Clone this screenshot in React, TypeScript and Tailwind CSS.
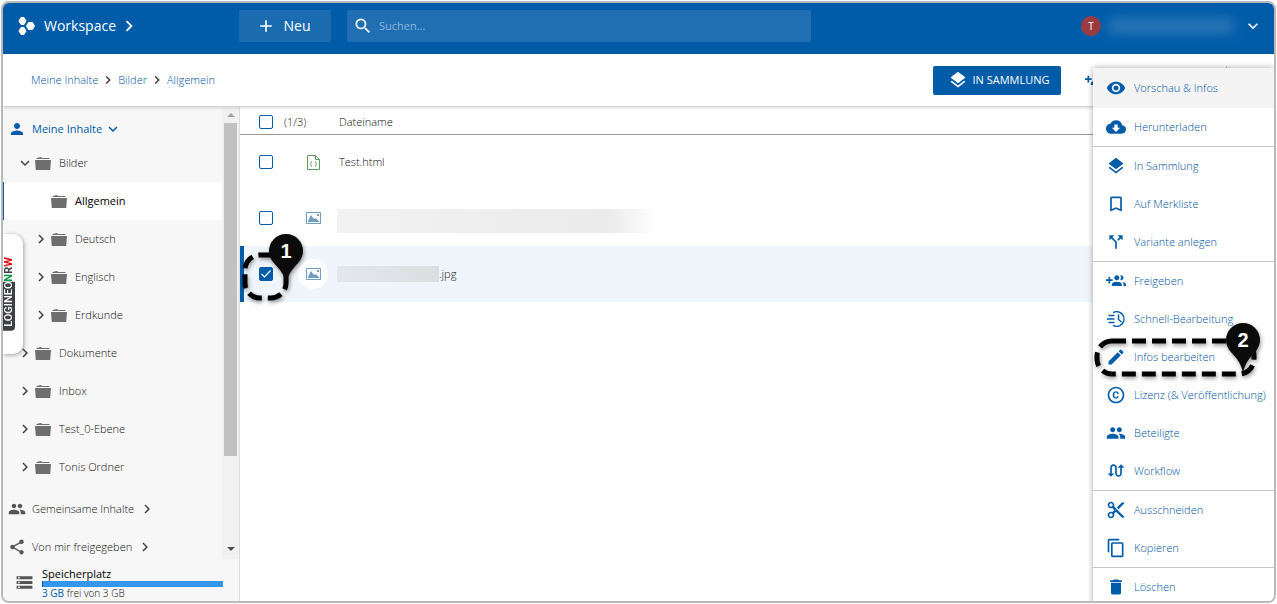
import { useState, type ComponentType, type ReactNode } from "react";
import {
  MdAdd,
  MdBookmarkBorder,
  MdCallSplit,
  MdCloudDownload,
  MdContentCopy,
  MdContentCut,
  MdCopyright,
  MdDelete,
  MdEdit,
  MdKeyboardArrowDown,
  MdKeyboardArrowRight,
  MdLayers,
  MdPeople,
  MdPerson,
  MdRemoveRedEye,
  MdSearch,
  MdShare,
  MdStorage,
  MdSwapCalls,
} from "react-icons/md";

type IconType = ComponentType<{ size?: number; className?: string }>;

function GroupAddIcon({ size = 20, className }: { size?: number; className?: string }) {
  return (
    <svg width={size} height={size} viewBox="0 0 24 24" fill="currentColor" className={className}>
      <path d="M8 10H5V7H3v3H0v2h3v3h2v-3h3v-2zm10 1c1.66 0 2.99-1.34 2.99-3S19.66 5 18 5c-.32 0-.63.05-.91.14.57.81.9 1.79.9 2.86s-.34 2.04-.9 2.86c.28.09.59.14.91.14zm-5 0c1.66 0 2.99-1.34 2.99-3S14.66 5 13 5c-1.66 0-3 1.34-3 3s1.34 3 3 3zm6.62 2.16c.83.73 1.38 1.66 1.38 2.84v2h3v-2c0-1.54-2.37-2.49-4.38-2.84zM13 13c-2 0-6 1-6 3v2h12v-2c0-2-4-3-6-3z" />
    </svg>
  );
}

function QuickEditIcon({ size = 20, className }: { size?: number; className?: string }) {
  return (
    <svg width={size} height={size} viewBox="0 0 20 20" fill="none" stroke="currentColor" strokeWidth="1.5" className={className}>
      <path d="M7 3.700A7.300 7.300 0 1 1 7 16.300" />
      <path d="M12.500 5.500v5l3 2.500M2.500 6.500h6M1 10h7.500M2.500 13.500h6" />
    </svg>
  );
}

function FolderIcon() {
  return (
    <svg width="16" height="13" viewBox="0 0 16 13" fill="#6e6e6e" className="shrink-0">
      <path d="M1.5 2V.9L6 0l1 .9h7.5V2zM0 3h16l-.8 10H.8z" />
    </svg>
  );
}

function Logo() {
  return (
    <svg width="18" height="18" viewBox="0 0 18 18" fill="white">
      <path d="M3 .5h3l2 3.500-2 3.500H3L1 4zM3 10.500h3l2 3.500-2 3.500H3L1 14zM10.500 5.500h4l2 3.500-2 3.500h-4L8.500 9z" stroke="white" strokeLinejoin="round" />
    </svg>
  );
}

// Numbered pin that points at a step of the tutorial
function Pin({ n }: { n: number }) {
  return (
    <>
      <svg width="36" height="52" viewBox="0 0 36 52" className="drop-shadow-[1px_2px_2px_rgba(0,0,0,0.4)]">
        <path d="M18 1a17 17 0 0 1 17 17c0 7-4 11-8 15.500C23 38 20 42 18 51 16 42 13 38 9 33.500 5 29 1 25 1 18A17 17 0 0 1 18 1z" fill="#0b0b0b" />
      </svg>
      <span className="absolute inset-x-0 top-1.5 text-center font-['Liberation_Sans'] text-xl leading-6 font-bold text-white">
        {n}
      </span>
    </>
  );
}

const TREE = [
  { name: "Bilder", level: 0, open: true },
  { name: "Allgemein", level: 1, active: true },
  { name: "Deutsch", level: 1 },
  { name: "Englisch", level: 1 },
  { name: "Erdkunde", level: 1 },
  { name: "Dokumente", level: 0 },
  { name: "Inbox", level: 0 },
  { name: "Test_0-Ebene", level: 0 },
  { name: "Tonis Ordner", level: 0 },
];

const MENU: { label: string; icon: IconType }[][] = [
  [
    { label: "Vorschau & Infos", icon: MdRemoveRedEye },
    { label: "Herunterladen", icon: MdCloudDownload },
  ],
  [
    { label: "In Sammlung", icon: MdLayers },
    { label: "Auf Merkliste", icon: MdBookmarkBorder },
    { label: "Variante anlegen", icon: MdCallSplit },
  ],
  [
    { label: "Freigeben", icon: GroupAddIcon },
    { label: "Schnell-Bearbeitung", icon: QuickEditIcon },
    { label: "Infos bearbeiten", icon: MdEdit },
    { label: "Lizenz (& Veröffentlichung)", icon: MdCopyright },
    { label: "Beteiligte", icon: MdPeople },
    { label: "Workflow", icon: MdSwapCalls },
  ],
  [
    { label: "Ausschneiden", icon: MdContentCut },
    { label: "Kopieren", icon: MdContentCopy },
  ],
  [{ label: "Löschen", icon: MdDelete }],
];

export default function App() {
  return (
    <div className="h-screen bg-white p-px font-['Open_Sans',sans-serif] text-[11px] leading-4 font-light text-[#111]">
      <div className="relative flex h-full flex-col overflow-hidden rounded-lg border-2 border-[#b9b9b9]">
        <TopBar />
        <Toolbar />
        <div className="flex min-h-0 flex-1">
          <Sidebar />
          <FileList />
        </div>
        <ActionMenu />
      </div>
    </div>
  );
}

function TopBar() {
  return (
    <header className="flex h-[51px] shrink-0 items-center bg-[#005ca9] pb-1.5 text-white">
      <button className="flex w-[236px] shrink-0 items-center pl-[15px]">
        <Logo />
        <span className="ml-2 text-sm font-medium">Workspace</span>
        <MdKeyboardArrowRight size={22} className="ml-0.5" />
      </button>
      <button className="flex h-8 w-[92px] shrink-0 items-center justify-center gap-2 bg-[#1b6bb1] pr-1 text-sm font-medium">
        <MdAdd size={20} />
        Neu
      </button>
      <label className="ml-4 flex h-8 w-[464px] items-center gap-1.5 rounded-xs bg-[#1f6fb2] pl-1.5">
        <MdSearch size={20} className="shrink-0" />
        <input
          type="text"
          aria-label="Suchen"
          placeholder="Suchen..."
          className="min-w-0 flex-1 bg-transparent font-normal outline-none placeholder:text-[#8fb8dc]"
        />
      </label>
      <button aria-label="Benutzerkonto" className="mr-[11px] ml-auto flex items-center">
        <span className="flex h-5 w-5 items-center justify-center rounded-full bg-[#9b3a3f] text-[10px] font-normal">T</span>
        <span className="ml-1.5 h-4 w-32 rounded-full bg-[#2a75b7] blur-[6px]" />
        <MdKeyboardArrowDown size={20} className="ml-2" />
      </button>
    </header>
  );
}

function Toolbar() {
  return (
    <div className="z-10 flex h-[53px] shrink-0 items-center border-b border-[#d6d6d6] bg-white shadow-[0_1px_3px_rgba(0,0,0,0.15)]">
      <nav className="flex items-center gap-0.5 pl-7 text-[#0055a4]">
        <a href="#">Meine Inhalte</a>
        <MdKeyboardArrowRight size={16} className="text-[#333]" />
        <a href="#">Bilder</a>
        <MdKeyboardArrowRight size={16} className="text-[#333]" />
        <a href="#">Allgemein</a>
      </nav>
      <button className="ml-auto flex h-[29px] w-32 items-center justify-center gap-1 rounded-xs bg-[#005ca9] pl-1 font-normal text-white">
        <MdLayers size={20} />
        IN SAMMLUNG
      </button>
      <button aria-label="Freigeben" className="ml-6 h-[29px] w-[142px] border-r border-[#ccc] text-[#005ca9]">
        <GroupAddIcon size={20} />
      </button>
      <span className="w-[47px]" />
    </div>
  );
}

function Sidebar() {
  return (
    <aside className="relative flex w-[237px] shrink-0 flex-col border-r border-[#ddd] bg-[#f7f7f7]">
      <div className="flex min-h-0 flex-1">
        <div className="min-w-0 flex-1 overflow-hidden pt-[7px]">
          <button className="flex h-[30px] items-center pl-[5px] font-medium text-[#005ca9]">
            <MdPerson size={18} />
            <span className="ml-1.5">Meine Inhalte</span>
            <MdKeyboardArrowDown size={18} className="ml-0.5" />
          </button>
          <ul>
            {TREE.map((f) => (
              <li key={f.name} className={f.active ? "bg-white" : ""}>
                <button
                  className={`flex h-[38px] w-full items-center gap-2 border-l ${f.level ? "pl-7" : "pl-3"} ${
                    f.active ? "border-[#005ca9] font-medium text-black" : "border-transparent"
                  }`}
                >
                  <span className="flex w-[11px] shrink-0 justify-start">
                    {f.open ? (
                      <MdKeyboardArrowDown size={18} className="shrink-0 text-[#444]" />
                    ) : (
                      !f.active && <MdKeyboardArrowRight size={18} className="shrink-0 text-[#444]" />
                    )}
                  </span>
                  <FolderIcon />
                  {f.name}
                </button>
              </li>
            ))}
          </ul>
          <SectionLink icon={MdPeople} label="Gemeinsame Inhalte" first />
          <SectionLink icon={MdShare} label="Von mir freigegeben" />
        </div>
        <div className="flex w-[17px] shrink-0 flex-col items-center bg-[#f1f1f1]">
          <span className="mt-1.5 mb-1.5 border-x-4 border-b-4 border-transparent border-b-[#a3a3a3]" />
          <span className="h-[333px] w-[13px] bg-[#c1c1c1]" />
          <span className="mt-auto mb-2 border-x-4 border-t-4 border-transparent border-t-[#505050]" />
        </div>
      </div>
      <div className="flex h-[42px] shrink-0 items-center gap-2 pt-1 pr-4 pl-3">
        <MdStorage size={19} className="shrink-0 text-[#555]" />
        <div className="min-w-0 flex-1">
          <div className="font-medium text-black">Speicherplatz</div>
          <div className="-mt-px h-1.5 border-l border-[#005ca9] bg-[#3596f0]" role="progressbar" aria-valuenow={100} aria-label="Speicherplatz" />
          <div className="text-[10px] leading-3">
            <span className="font-medium text-[#005ca9]">3 GB</span> frei von 3 GB
          </div>
        </div>
      </div>
      {/* Lasche am linken Rand */}
      <a
        href="#"
        className="absolute top-[127px] left-0 flex h-[120px] w-5 items-center rounded-r-[10px] bg-white shadow-[1px_1px_4px_rgba(0,0,0,0.35)]"
      >
        <span className="flex rotate-180 items-center font-['Roboto'] text-[11px] leading-3 font-bold [writing-mode:vertical-rl]">
          <span className="rounded-tl-[4px] bg-[#3f4047] pt-1 font-medium text-white">LOGINEO</span>
          <span className="text-[#009640]">N</span>
          <span className="text-[#3f4047]">R</span>
          <span className="text-[#e3000f]">W</span>
        </span>
      </a>
    </aside>
  );
}

function SectionLink({ icon: Icon, label, first }: { icon: IconType; label: string; first?: boolean }) {
  return (
    <button className={`flex h-[38px] items-center pl-[5px] ${first ? "mt-1" : ""}`}>
      <Icon size={18} className="text-[#555]" />
      <span className="ml-1.5">{label}</span>
      <MdKeyboardArrowRight size={18} className="ml-1 text-[#444]" />
    </button>
  );
}

function CheckBox({ label, initial = false }: { label: string; initial?: boolean }) {
  const [checked, setChecked] = useState(initial);
  return (
    <label className="relative block h-3.5 w-3.5">
      <input
        type="checkbox"
        aria-label={label}
        checked={checked}
        onChange={(e) => setChecked(e.target.checked)}
        className="block h-3.5 w-3.5 appearance-none rounded-[2px] border border-[#005ca9] bg-white checked:bg-[#005ca9]"
      />
      {checked && (
        <svg viewBox="0 0 14 14" className="pointer-events-none absolute inset-0" fill="none" stroke="white" strokeWidth="1.2">
          <path d="M2.500 7l3 3 6-6.500" />
        </svg>
      )}
    </label>
  );
}

function HtmlFileIcon() {
  return (
    <svg width="13" height="15" viewBox="0 0 13 15" fill="none" stroke="#5d9e5f">
      <path d="M.5.500h8l4 4v10H.5zM8.500.500v4h4" />
      <path d="M5 6.500c-1.500 0-.5 2-1.700 2.500C4.500 9.500 3.500 11.500 5 11.500M8 6.500c1.500 0 .5 2 1.700 2.500C8.500 9.500 9.500 11.500 8 11.500" />
    </svg>
  );
}

function ImageFileIcon() {
  return (
    <svg width="15" height="12" viewBox="0 0 15 12">
      <path d="M.5.500h14v11H.5z" fill="#fff" stroke="#6f9dbf" />
      <path d="M2 10V9l3-6 3 4 1.500-1L13 9v1zM11 2h2v2h-2z" fill="#6f9dbf" />
    </svg>
  );
}

function FileRow({ label, icon, selected, children }: { label: string; icon: ReactNode; selected?: boolean; children: ReactNode }) {
  return (
    <tr className={`h-14 ${selected ? "bg-[#eff5fa] shadow-[inset_4px_0_#005ca9]" : ""}`}>
      <td className="pl-[19px]">
        <div className="relative w-3.5">
          <CheckBox label={label} initial={selected} />
          {selected && (
            <div className="pointer-events-none absolute -top-10 -left-[18px]">
              <svg width="50" height="82" viewBox="0 0 50 82" className="drop-shadow-[1px_2px_2px_rgba(0,0,0,0.4)]">
                <rect x="4" y="28" width="41" height="43" rx="15" fill="none" stroke="black" strokeWidth="5" strokeDasharray="14 6" />
              </svg>
              <div className="absolute top-1.5 left-[27px]">
                <Pin n={1} />
              </div>
            </div>
          )}
        </div>
      </td>
      <td>
        <span className={`-ml-px flex h-[30px] w-[30px] items-center justify-center rounded-full ${selected ? "bg-white" : ""}`}>{icon}</span>
      </td>
      <td>{children}</td>
    </tr>
  );
}

function FileList() {
  return (
    <main className="min-w-0 flex-1 bg-white">
      <table className="w-full table-fixed border-collapse text-left">
        <thead>
          <tr className="h-[27px] border-b border-[#999]">
            <th className="w-[59px] pt-1 pl-[19px] font-light">
              <CheckBox label="Alle auswählen" />
            </th>
            <th className="w-10 pt-1 font-light">
              <span className="-ml-[15px]">(1/3)</span>
            </th>
            <th className="pt-1 font-light">Dateiname</th>
          </tr>
        </thead>
        <tbody>
          <FileRow label="Test.html" icon={<HtmlFileIcon />}>
            Test.html
          </FileRow>
          <FileRow label="Bild" icon={<ImageFileIcon />}>
            <div className="mt-1.5 -ml-0.5 h-6 w-80 bg-linear-to-r from-[#f2f2f2] via-[#ebebeb] via-85% to-white" />
          </FileRow>
          <FileRow label="Bild .jpg" icon={<ImageFileIcon />} selected>
            <div className="-ml-0.5 flex items-center">
              <span className="h-4 w-[102px] bg-linear-to-r from-[#e3e7eb] to-[#dcdfe2]" />
              .jpg
            </div>
          </FileRow>
        </tbody>
      </table>
    </main>
  );
}

function ActionMenu() {
  return (
    <div className="absolute top-[65px] right-0 z-20 w-[181px] bg-white text-[#0055a4] shadow-[0_0_6px_rgba(0,0,0,0.35)]">
      {MENU.map((group, g) => (
        <div key={g} className={g ? "border-t border-[#c4c4c4]" : ""}>
          {group.map(({ label, icon: Icon }) => (
            <div key={label} className="relative">
              <button
                className={`flex w-full items-center gap-2 pl-[13px] whitespace-nowrap ${
                  label === "Vorschau & Infos" ? "h-10 bg-[#f4f4f4]" : "h-[38px]"
                }`}
              >
                <Icon size={20} className="shrink-0 text-[#005ca9]" />
                {label}
              </button>
              {label === "Infos bearbeiten" && (
                <div className="pointer-events-none absolute -top-4 left-0 z-10">
                  <svg width="170" height="60" viewBox="0 0 170 60" className="drop-shadow-[1px_2px_2px_rgba(0,0,0,0.4)]">
                    <rect x="4" y="19" width="157" height="33" rx="15" fill="none" stroke="black" strokeWidth="5" strokeDasharray="14 6" />
                  </svg>
                  <div className="absolute top-0 left-[132px]">
                    <Pin n={2} />
                  </div>
                </div>
              )}
            </div>
          ))}
        </div>
      ))}
    </div>
  );
}
